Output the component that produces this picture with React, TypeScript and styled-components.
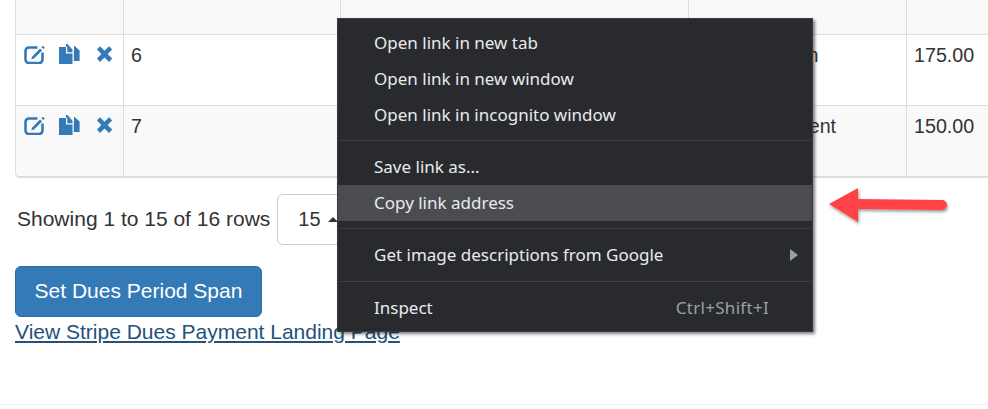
import React from 'react'
import styled, { createGlobalStyle } from 'styled-components'

const GlobalStyle = createGlobalStyle`
  html, body {
    margin: 0;
    padding: 0;
    overflow: hidden;
    background: #fff;
  }
  body {
    font-family: "Liberation Sans", Arial, sans-serif;
    font-size: 21px;
    line-height: 1.43;
    color: #333;
  }
`

const Page = styled.div`
  position: relative;
  width: 988px;
  height: 409px;
  overflow: hidden;
`

const TablePanel = styled.div`
  width: 1100px;
  margin-left: 15px;
  border-left: 1px solid #ddd;
  border-bottom: 2px solid #ddd;
  border-bottom-left-radius: 5px;
  overflow: hidden;
`

const Table = styled.table`
  width: 100%;
  table-layout: fixed;
  border-collapse: separate;
  border-spacing: 0;
  font-size: 19.7px;
`

const Row = styled.tr<{ $striped?: boolean; $height: number }>`
  height: ${(p) => p.$height}px;
  background: ${(p) => (p.$striped ? '#f9f9f9' : '#fff')};
`

const Cell = styled.td<{ $last?: boolean }>`
  box-sizing: border-box;
  padding: 6px 7px 6px 7px;
  vertical-align: top;
  white-space: nowrap;
  overflow: hidden;
  border-right: 1px solid #ddd;
  border-bottom: ${(p) => (p.$last ? 'none' : '1px solid #ddd')};
`

const IconRow = styled.div`
  display: flex;
  gap: 14px;
  padding: 3px 0 0 1px;
`

const ActionIcon = styled.svg`
  display: block;
  width: 21px;
  height: 20px;
  fill: #337ab7;
`

const Pagination = styled.div`
  display: flex;
  align-items: center;
  gap: 7px;
  margin: 16px 0 21px 17px;
`

const PageSize = styled.div`
  box-sizing: border-box;
  display: flex;
  align-items: center;
  gap: 7px;
  width: 90px;
  height: 51px;
  padding-left: 20px;
  border: 1px solid #ccc;
  border-radius: 6px;
  font-size: 20px;
`

const Caret = styled.span`
  width: 0;
  height: 0;
  border-left: 5px solid transparent;
  border-right: 5px solid transparent;
  border-bottom: 5px solid #333;
`

const PrimaryButton = styled.button`
  display: block;
  box-sizing: border-box;
  width: 247px;
  height: 51px;
  margin-left: 15px;
  padding: 0;
  font: inherit;
  color: #fff;
  background: #337ab7;
  border: 1px solid #2e6da4;
  border-radius: 6px;
`

const LandingLink = styled.a`
  display: inline-block;
  margin-left: 15px;
  color: #23527c;
  text-decoration: underline;
`

const Footer = styled.div`
  margin-top: 57px;
  border-top: 1px solid #eee;
`

const Menu = styled.div`
  position: absolute;
  left: 337px;
  top: 18px;
  box-sizing: border-box;
  width: 476px;
  height: 314px;
  padding-top: 6px;
  background: #292a2d;
  border: 1px solid #3c3d40;
  box-shadow: 2px 2px 3px rgba(0, 0, 0, 0.5);
  font-family: "Noto Sans", sans-serif;
  font-size: 17px;
  color: #e8eaed;
`

const MenuItem = styled.div<{ $active?: boolean }>`
  display: flex;
  align-items: center;
  justify-content: space-between;
  height: 36px;
  padding: 0 43px 0 36px;
  background: ${(p) => (p.$active ? '#4b4c4f' : 'transparent')};
`

const Shortcut = styled.span`
  color: #9aa0a6;
  letter-spacing: 0.3px;
`

const SubmenuArrow = styled.span`
  margin-right: -29px;
  width: 0;
  height: 0;
  border-top: 6.5px solid transparent;
  border-bottom: 6.5px solid transparent;
  border-left: 8px solid #9aa0a6;
`

const Separator = styled.div<{ $top?: number }>`
  height: 1px;
  margin: ${(p) => p.$top ?? 7}px 1px 8px 2px;
  background: #3f4043;
`

const Arrow = styled.svg`
  position: absolute;
  left: 822px;
  top: 184px;
  width: 132px;
  height: 44px;
`

const EditIcon = () => (
  <ActionIcon viewBox="0 0 21 20">
    <path
      d="M13.5 3.5H5A3.5 3.5 0 0 0 1.5 7v8.5A3.5 3.5 0 0 0 5 19h10a3.5 3.5 0 0 0 3.5-3.5V8.5"
      fill="none"
      stroke="#337ab7"
      strokeWidth="2.6"
    />
    <path d="M8 12.7 16 4.6l2 2-8 8-2.6.7zM17.4 3.2 18.8 1.8l2 1.9-1.4 1.4z" />
  </ActionIcon>
)

const DuplicateIcon = () => (
  <ActionIcon viewBox="0 0 21 20">
    <path d="M0 3h7v6.5h6.5V20H0z" />
    <path d="M7 0h1.5l5 5.8v2.4H8.3V2.8H7zM15 2h.6l5 4.5V17h-5.8V7.5H15z" />
  </ActionIcon>
)

const RemoveIcon = () => (
  <ActionIcon viewBox="0 0 21 20">
    <path d="M3 5.6 6 2.2l4.5 4.6 4.6-4.6 3.1 3.4-4.6 4.4 4.6 4.6-3.1 3.3-4.6-4.5L6 18 3 14.6 7.3 10z" />
  </ActionIcon>
)

const Actions = () => (
  <IconRow>
    <EditIcon />
    <DuplicateIcon />
    <RemoveIcon />
  </IconRow>
)

const rows = [
  { id: '6', plan: 'Senior Citizen', amount: '175.00' },
  { id: '7', plan: 'Senior Resident', amount: '150.00' },
]

const App: React.FC = () => {
  return (
    <Page>
      <GlobalStyle />
      <TablePanel>
        <Table>
          <colgroup>
            <col style={{ width: 108 }} />
            <col style={{ width: 217 }} />
            <col style={{ width: 348 }} />
            <col style={{ width: 218 }} />
            <col />
          </colgroup>
          <tbody>
            <Row $striped $height={35}>
              <Cell />
              <Cell />
              <Cell />
              <Cell />
              <Cell />
            </Row>
            {rows.map((row, i) => {
              const last = i === rows.length - 1
              return (
                <Row key={row.id} $striped={last} $height={last ? 70 : 71}>
                  <Cell $last={last}>
                    <Actions />
                  </Cell>
                  <Cell $last={last}>{row.id}</Cell>
                  <Cell $last={last} />
                  <Cell $last={last}>{row.plan}</Cell>
                  <Cell $last={last}>{row.amount}</Cell>
                </Row>
              )
            })}
          </tbody>
        </Table>
      </TablePanel>

      <Pagination>
        <span>Showing 1 to 15 of 16 rows</span>
        <PageSize>
          15
          <Caret />
        </PageSize>
      </Pagination>

      <PrimaryButton>Set Dues Period Span</PrimaryButton>
      <LandingLink href="#">View Stripe Dues Payment Landing Page</LandingLink>
      <Footer />

      <Menu>
        <MenuItem>Open link in new tab</MenuItem>
        <MenuItem>Open link in new window</MenuItem>
        <MenuItem>Open link in incognito window</MenuItem>
        <Separator />
        <MenuItem>Save link as...</MenuItem>
        <MenuItem $active>Copy link address</MenuItem>
        <Separator />
        <MenuItem>
          Get image descriptions from Google
          <SubmenuArrow />
        </MenuItem>
        <Separator $top={8} />
        <MenuItem>
          Inspect
          <Shortcut>Ctrl+Shift+I</Shortcut>
        </MenuItem>
      </Menu>

      <Arrow viewBox="0 0 132 44">
        <defs>
          <filter id="arrow-shadow" x="-10%" y="-30%" width="120%" height="170%">
            <feDropShadow dx="1" dy="2" stdDeviation="1.5" floodColor="#000" floodOpacity="0.4" />
          </filter>
        </defs>
        <path
          d="M7 20 36 4v11l84 1a5 5 0 0 1 0 10l-84-1v13z"
          fill="#ff4245"
          filter="url(#arrow-shadow)"
        />
      </Arrow>
    </Page>
  )
}

export default App
